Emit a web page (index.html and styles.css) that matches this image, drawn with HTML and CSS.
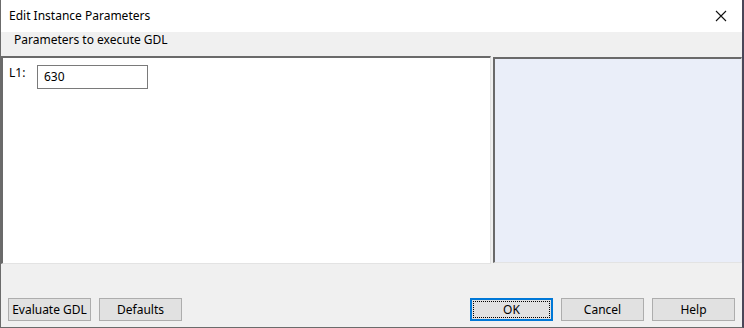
FILE: index.html
```html
<!DOCTYPE html>
<html>
<head>
<meta charset="utf-8">
<link rel="stylesheet" href="styles.css">
</head>
<body>
<div class="window">
  <div class="titlebar">
    <span class="title">Edit Instance Parameters</span>
    <svg class="close" width="12" height="12" viewBox="0 0 12 12"><path d="M1 1L11 11M11 1L1 11" stroke="#111" stroke-width="1.1" fill="none"/></svg>
  </div>
  <div class="content">
    <div class="caption">Parameters to execute GDL</div>
    <div class="panels">
      <div class="params">
        <div class="row">
          <span class="label">L1:</span>
          <div class="input">630</div>
        </div>
      </div>
      <div class="preview"></div>
    </div>
    <div class="footer">
      <div class="group">
        <button class="btn">Evaluate GDL</button>
        <button class="btn">Defaults</button>
      </div>
      <div class="group">
        <button class="btn ok"><span class="focus">OK</span></button>
        <button class="btn">Cancel</button>
        <button class="btn">Help</button>
      </div>
    </div>
  </div>
</div>
</body>
</html>
```
FILE: styles.css
```css
* { box-sizing: border-box; }
html, body { margin: 0; padding: 0; background: #f0f0f0; }
body { font-family: "Noto Sans", "Liberation Sans", Arial, sans-serif; font-size: 12px; color: #000; }
.window {
  width: 744px; height: 328px;
  border-left: 1px solid #6b6b6b;
  border-right: 2px solid #4a4658;
  border-bottom: 1px solid #6b6b6b;
  display: flex; flex-direction: column;
  background: #f0f0f0;
}
.titlebar {
  height: 32px; background: #fff;
  display: flex; align-items: center; justify-content: space-between;
  padding: 0 15px 0 8px;
}
.title { position: relative; top: -1px; }
.close { display: block; }
.content { flex: 1; display: flex; flex-direction: column; }
.caption { height: 24px; padding: 0 0 0 13px; line-height: 16px; }
.panels { display: flex; height: 208px; gap: 2px; }
.params {
  width: 490px; background: #fff;
  border-top: 2px solid #6a6a6a; border-left: 2px solid #6a6a6a;
  border-right: 1px solid #e3e3e3; border-bottom: 1px solid #e3e3e3;
  padding: 6px 0 0 6px;
}
.row { display: flex; align-items: flex-start; }
.label { width: 28px; line-height: 16px; margin-top: 1px; }
.input {
  width: 111px; height: 24px; border: 1px solid #7a7a7a;
  padding: 3px 0 0 6px; line-height: 16px; margin-top: 1px;
}
.preview {
  flex: 1; margin-top: 1px; margin-bottom: 1px; background: #eaeef9;
  border-top: 2px solid #6a6a6a; border-left: 2px solid #6a6a6a;
  border-right: 1px solid #e3e3e3; border-bottom: 1px solid #e3e3e3;
}
.footer {
  flex: 1; display: flex; justify-content: space-between; align-items: flex-end;
  padding: 0 7px 6px 7px;
}
.group { display: flex; gap: 8px; }
.btn {
  width: 83px; height: 23px; background: #e1e1e1; border: 1px solid #adadad;
  font: inherit; color: #000; padding: 0; margin: 0;
  display: flex; align-items: center; justify-content: center;
}
.ok { border: 2px solid #0078d7; padding: 1px; }
.focus {
  width: 100%; height: 100%; border: 1px dotted #000;
  display: flex; align-items: center; justify-content: center;
}
```
